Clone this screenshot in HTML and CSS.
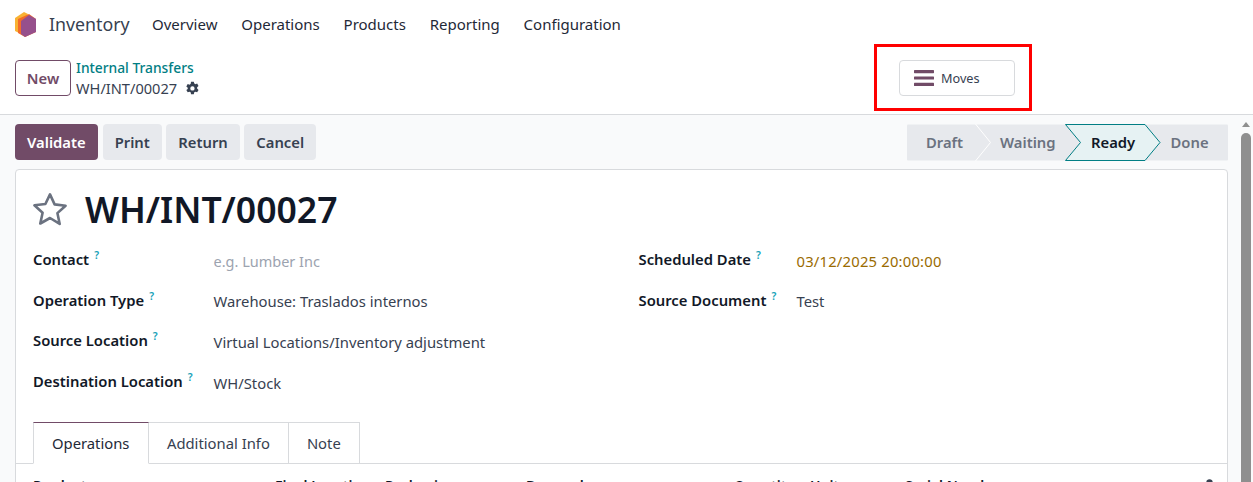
FILE: index.html
```html
<!DOCTYPE html>
<html lang="en">
<head>
<meta charset="utf-8">
<title>Inventory</title>
<link rel="stylesheet" href="styles.css">
</head>
<body>
<header class="navbar">
  <svg class="logo" width="24" height="28" viewBox="0 0 24 28">
    <path d="M1 8 10 2 14 4 7 24 1 21z" fill="#f9b233"/>
    <path d="M4 9 15 4 22 9V22L11 27 4 23z" fill="#f26b2a"/>
    <path d="M7 11 15 5 22 9V22L11 27 7 24z" fill="#96508c"/>
  </svg>
  <span class="brand">Inventory</span>
  <nav class="menu">
    <span>Overview</span><span>Operations</span><span>Products</span><span>Reporting</span><span>Configuration</span>
  </nav>
</header>
<section class="control">
  <button class="btn-new">New</button>
  <div class="crumbs">
    <a class="crumb-link">Internal Transfers</a>
    <div class="crumb-cur">WH/INT/00027
      <svg class="gear" width="15" height="15" viewBox="0 0 14 14"><path fill="#374151" fill-rule="evenodd" d="M5.700.6h2.600l.4 1.800c.4.150.7.300 1 .55l1.750-.55 1.300 2.250-1.350 1.250c.05.400.05.800 0 1.200l1.350 1.250-1.300 2.250-1.750-.55c-.3.250-.6.400-1 .55l-.4 1.800H5.700l-.4-1.800c-.4-.15-.7-.3-1-.55l-1.750.55-1.300-2.250L2.600 7.550c-.05-.4-.05-.8 0-1.200L1.250 5.100l1.300-2.250 1.750.55c.3-.25.6-.4 1-.55zM7 4.900a2.050 2.050 0 1 0 0 4.100 2.050 2.050 0 0 0 0-4.100z"/></svg>
    </div>
  </div>
  <div class="moves-slot">
    <button class="btn-moves">
      <svg width="20" height="16" viewBox="0 0 20 16"><g fill="#714b67"><rect y="0" width="20" height="3.200" rx=".6"/><rect y="6.400" width="20" height="3.200" rx=".6"/><rect y="12.800" width="20" height="3.200" rx=".6"/></g></svg>
      <span>Moves</span>
    </button>
  </div>
</section>
<div class="annotation"></div>
<main class="content">
  <div class="scroll-area">
    <div class="actions">
      <div class="action-btns">
        <button class="btn primary">Validate</button>
        <button class="btn">Print</button>
        <button class="btn">Return</button>
        <button class="btn">Cancel</button>
      </div>
      <div class="statusbar">
        <svg class="status-bg" width="321" height="37" viewBox="0 0 321 37">
          <rect width="321" height="36" y=".5" fill="#e7e9ed" rx="1"/>
          <path d="M68.500 0 83.500 18.500 68.500 37" fill="none" stroke="#fff" stroke-width="1"/>
          <path d="M158.500.5H238L253 18.500 238 36.500H158.500L173.500 18.500z" fill="#e6f2f3" stroke="#017e84" stroke-width="1"/>
        </svg>
        <span class="st st-draft">Draft</span>
        <span class="st st-waiting">Waiting</span>
        <span class="st st-ready">Ready</span>
        <span class="st st-done">Done</span>
      </div>
    </div>
    <article class="sheet">
      <div class="title-row">
        <svg class="star" width="36" height="34" viewBox="0 0 36 34"><path d="M18 2.400l4.600 10 11 1.300-8.200 7.400 2.300 10.800L18 26 8.300 31.500l2.300-10.800-8.200-7.400 11-1.300z" fill="none" stroke="#6b7280" stroke-width="2.600" stroke-linejoin="round"/></svg>
        <h1>WH/INT/00027</h1>
      </div>
      <div class="groups">
        <div class="group group-left">
          <div class="row"><label>Contact<sup>?</sup></label><span class="val ph">e.g. Lumber Inc</span></div>
          <div class="row"><label>Operation Type<sup>?</sup></label><span class="val">Warehouse: Traslados internos</span></div>
          <div class="row"><label>Source Location<sup>?</sup></label><span class="val">Virtual Locations/Inventory adjustment</span></div>
          <div class="row"><label>Destination Location<sup>?</sup></label><span class="val">WH/Stock</span></div>
        </div>
        <div class="group group-right">
          <div class="row"><label>Scheduled Date<sup>?</sup></label><span class="val warn">03/12/2025 20:00:00</span></div>
          <div class="row"><label>Source Document<sup>?</sup></label><span class="val">Test</span></div>
        </div>
      </div>
      <div class="tabs">
        <span class="tab active">Operations</span><span class="tab">Additional Info</span><span class="tab">Note</span>
      </div>
      <div class="thead">
        <span class="c1">Product</span><span class="c2">Final Location</span><span class="c3">Packaging</span><span class="c4">Demand</span><span class="c5">Quantity</span><span class="c6">Unit</span><span class="c7">Serial Numbers</span>
        <svg class="c8" width="7" height="7" viewBox="0 0 7 7"><circle cx="3.500" cy="3.500" r="3.200" fill="#374151"/></svg>
      </div>
    </article>
  </div>
  <div class="scrollbar"><span class="sb-up"></span><span class="sb-thumb"></span></div>
</main>
</body>
</html>
```
FILE: styles.css
```css
* { box-sizing: border-box; }
html, body { margin: 0; height: 482px; overflow: hidden; background: #fff; }
body { font-family: "Noto Sans", sans-serif; font-size: 14.800px; color: #374151; position: relative; }
button { font: inherit; cursor: pointer; }

.navbar { height: 48px; display: flex; align-items: center; padding-left: 14px; }
.logo { flex: none; }
.brand { font-size: 17.800px; margin-left: 11px; color: #374151; width: 103px; }
.menu { display: flex; gap: 23.800px; color: #1f2937; font-size: 15px; }

.control { height: 67px; border-bottom: 1px solid #d8dadd; display: flex; align-items: flex-start; padding: 12px 0 0 15px; }
.btn-new { width: 56px; height: 36px; background: #fff; border: 1px solid #714b67; border-radius: 4px; color: #714b67; font-weight: 600; padding: 0; }
.crumbs { margin-left: 5px; display: flex; flex-direction: column; line-height: 20px; margin-top: -2px; width: 124px; flex: none; }
.crumb-link { color: #017e84; font-weight: 500; font-size: 13.800px; }
.crumb-cur { color: #374151; font-size: 14.600px; display: flex; align-items: center; gap: 8px; }
.moves-slot { margin-left: 699px; }
.btn-moves { width: 116px; height: 36px; background: #fff; border: 1px solid #d8dadd; border-radius: 4px; display: flex; align-items: center; gap: 7px; padding: 0 0 0 14px; font-size: 12.700px; color: #374151; }

.annotation { position: absolute; left: 874px; top: 44px; width: 158px; height: 67px; border: 3px solid #f00; }

.content { height: 367px; background: #f9fafb; display: flex; }
.scroll-area { flex: 1; min-width: 0; padding: 9px 10px 0 15px; overflow: hidden; }
.actions { display: flex; justify-content: space-between; align-items: flex-start; height: 45px; }
.action-btns { display: flex; gap: 4.500px; }
.btn { height: 36px; border: 0; border-radius: 4px; background: #e7e9ed; color: #374151; font-weight: 600; padding: 0 12px; }
.btn.primary { background: #714b67; color: #fff; padding: 0 12.500px 0 12px; }

.statusbar { position: relative; width: 321px; height: 37px; font-weight: 600; color: #6b7280; }
.status-bg { position: absolute; left: 0; top: 0; }
.st { position: absolute; top: 0; line-height: 37px; }
.st-draft { left: 19px; }
.st-waiting { left: 93px; }
.st-ready { left: 184px; color: #111827; }
.st-done { left: 263.500px; }

.sheet { background: #fff; border: 1px solid #d8dadd; border-radius: 4px; height: 340px; overflow: hidden; }
.title-row { display: flex; align-items: center; padding: 15px 0 0 16px; height: 63px; gap: 17px; }
h1 { margin: 0; font-size: 35.600px; font-weight: 600; color: #111827; line-height: 46px; }
.groups { display: flex; padding: 16px 0 0 17px; }
.group { display: flex; flex-direction: column; }
.group-left { width: 605.500px; }
.row { display: flex; height: 40.700px; align-items: flex-start; }
label { color: #111827; font-weight: 600; display: block; }
sup { color: #17a2b8; font-size: 10.500px; font-weight: 600; margin-left: 5px; line-height: 0; vertical-align: 6px; }
.group-left label { width: 180.500px; }
.group-right label { width: 158px; }
.val { margin-top: 1.500px; }
.ph { color: #9ca3af; font-size: 14.500px; }
.warn { color: #9a6b01; letter-spacing: .2px; }

.tabs { display: flex; padding-left: 17px; height: 42px; border-bottom: 1px solid #d8dadd; margin-top: 10px; }
.tab { height: 42px; padding: 0 18.500px 0 17.500px; line-height: 41px; border: 1px solid #d8dadd; border-left: 0; }
.tab.active { border-left: 1px solid #d8dadd; border-top: 1px solid #714b67; border-bottom-color: #fff; color: #1f2937; padding: 0 19px 0 18px; }

.thead { position: relative; height: 30px; color: #111827; font-weight: 600; font-size: 14px; }
.thead span { position: absolute; top: 12px; }
.c1 { left: 17px; } .c2 { left: 259px; } .c3 { left: 369px; } .c4 { left: 510px; } .c5 { left: 718px; } .c6 { left: 794px; } .c7 { left: 889px; }
.thead .c8 { position: absolute; left: 1190px; top: 15px; }

.scrollbar { width: 15px; flex: none; padding-left: 1px; display: flex; flex-direction: column; align-items: center; }
.sb-up { margin-top: 7px; border: 4.500px solid transparent; border-top: 0; border-bottom: 5px solid #8f8f8f; }
.sb-thumb { width: 10px; flex: 1; margin-top: 6px; background: #8f8f8f; border-radius: 5px 5px 0 0; }
```
